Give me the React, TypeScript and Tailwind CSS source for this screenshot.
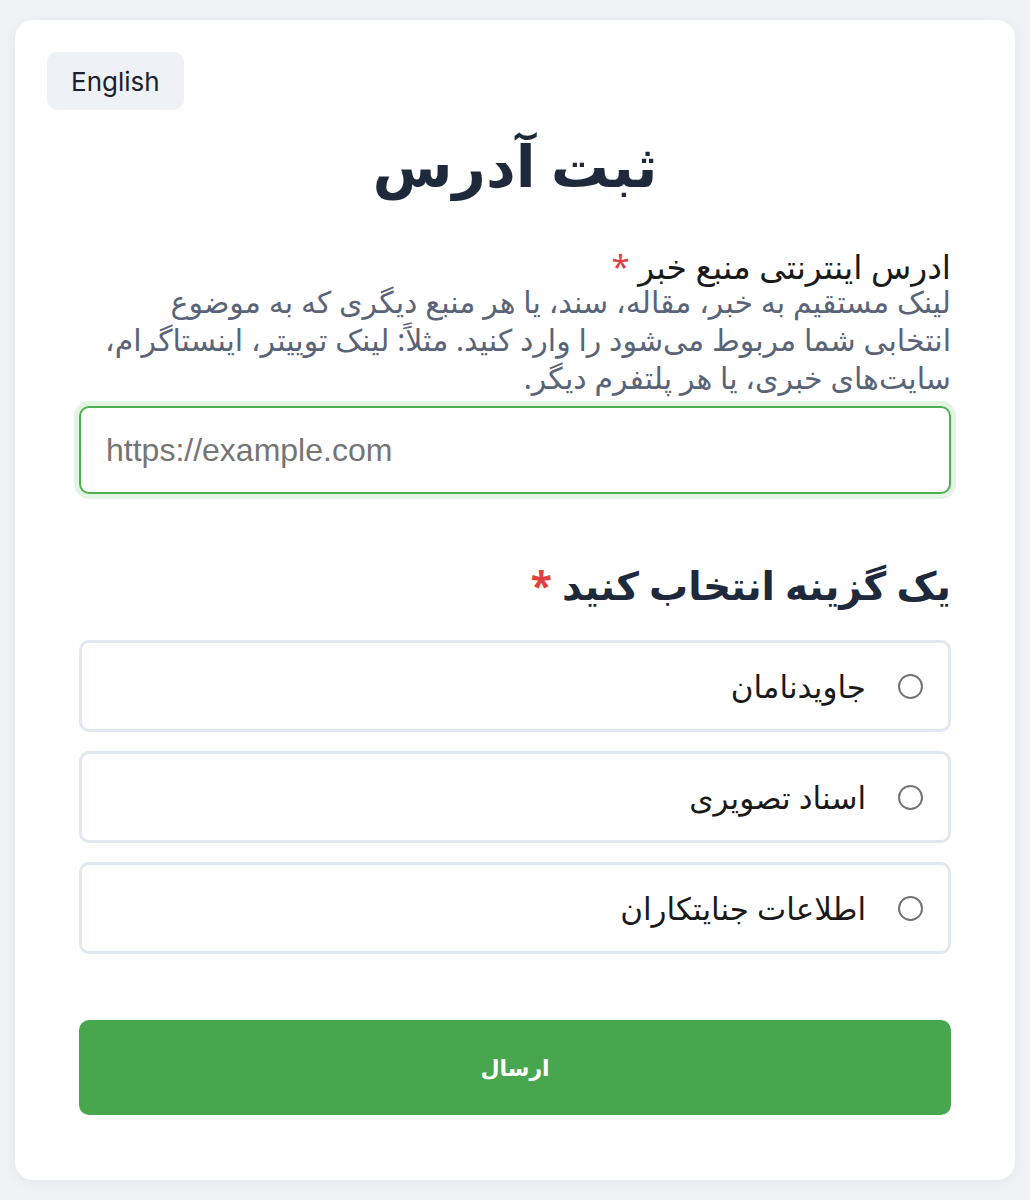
import React, { useState } from 'react';

const options = ['جاویدنامان', 'اسناد تصویری', 'اطلاعات جنایتکاران'];

const Radio = ({ checked }: { checked: boolean }) => (
  <span className="flex h-[25px] w-[25px] shrink-0 items-center justify-center rounded-full border-2 border-[#737373] bg-white">
    {checked && <span className="h-[11px] w-[11px] rounded-full bg-[#48a64f]" />}
  </span>
);

export default function App() {
  const [url, setUrl] = useState('');
  const [choice, setChoice] = useState<number | null>(null);

  return (
    <div className="min-h-[1200px] bg-[#f1f2f5] px-[15px] pt-[20px] font-['Noto_Sans','DejaVu_Sans',sans-serif]">
      <div className="rounded-[18px] bg-white px-[32px] pb-[65px] pt-[32px] shadow-[0_2px_12px_rgba(0,0,0,0.06)]">
        <div className="flex">
          <button className="h-[58px] rounded-[10px] bg-[#eef1f6] px-[24px] font-['Inter',sans-serif] text-[26px] text-[#1a202c]">
            English
          </button>
        </div>

        <div dir="rtl" className="px-[32px]">
          <h1 className="mt-[23px] text-center text-[58px] font-bold leading-[64px] text-[#1e293b]">ثبت آدرس</h1>

          <div className="mt-[53px]">
            <label className="block text-[33px] leading-[33px] text-[#1a1a1a]">
              ادرس اینترنتی منبع خبر <span className="text-[#e53e3e]">*</span>
            </label>
            <p className="text-[30px] leading-[38px] text-[#5a6478]">
              لینک مستقیم به خبر، مقاله، سند، یا هر منبع دیگری که به موضوع
              <br />
              انتخابی شما مربوط می‌شود را وارد کنید. مثلاً: لینک توییتر، اینستاگرام، سایت‌های خبری، یا هر پلتفرم دیگر.
            </p>
            <input
              dir="ltr"
              value={url}
              onChange={(e) => setUrl(e.target.value)}
              placeholder="https://example.com"
              className="mt-[9px] h-[88px] w-full rounded-[10px] border-2 border-[#4caf50] px-[25px] font-['Liberation_Sans',sans-serif] text-[32px] text-[#333] shadow-[0_0_0_5px_#e3f4e4] outline-none placeholder:text-[#757575]"
            />
          </div>

          <h2 className="mt-[65px] text-[39px] font-bold leading-[52px] text-[#1e293b]">
            یک گزینه انتخاب کنید <span className="text-[#e53e3e]">*</span>
          </h2>

          <div className="mt-[29px] flex flex-col gap-[19px]">
            {options.map((o, i) => (
              <label
                key={o}
                onClick={() => setChoice(i)}
                className="flex h-[92px] cursor-pointer items-center gap-[32px] rounded-[10px] border-[3px] border-[#e2e8f0] pr-[25px] pl-[26px] text-[31px] text-[#1a1a1a]"
              >
                <Radio checked={choice === i} />
                <span>{o}</span>
              </label>
            ))}
          </div>

          <button className="mt-[66px] h-[95px] w-full rounded-[10px] bg-[#48a64f] text-[22px] font-bold text-white">
            ارسال
          </button>
        </div>
      </div>
    </div>
  );
}
